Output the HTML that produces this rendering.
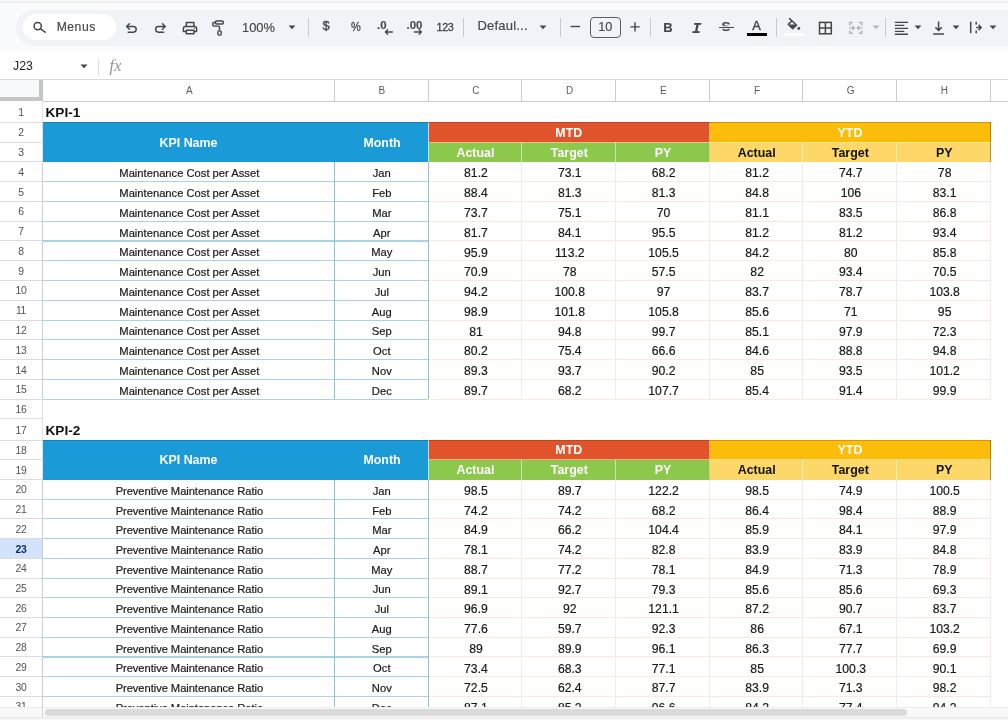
<!DOCTYPE html>
<html lang="en"><head><meta charset="utf-8"><title>KPI Sheet</title>
<style>
html,body{margin:0;padding:0;}
body{width:1008px;height:720px;overflow:hidden;background:#fff;position:relative;font-family:"Liberation Sans",sans-serif;color:#1f1f1f;}
div,svg,span{position:absolute;box-sizing:border-box;}
.t{white-space:nowrap;text-align:center;}
.cell{font-size:11.2px;color:#161616;-webkit-text-stroke:0.2px #222;white-space:nowrap;text-align:center;}
.num{font-size:12.2px;}
.rn{font-size:10.4px;letter-spacing:-0.35px;color:#4d5156;text-align:center;white-space:nowrap;}
.ch{font-size:10px;color:#585c61;text-align:center;white-space:nowrap;}
.hb{font-weight:bold;font-size:12.4px;text-align:center;white-space:nowrap;}
.tb{color:#444746;white-space:nowrap;-webkit-text-stroke:0.15px #444746;}
.sep{width:1px;background:#c7cace;top:18px;height:19px;}
</style></head><body><div id="w" style="left:0;top:0;width:1008px;height:720px;will-change:transform;">

<div style="left:0.00px;top:0.00px;width:1008.00px;height:3.00px;background:#f6f6f6;"></div>
<div style="left:0.00px;top:2.20px;width:1008.00px;height:1.00px;background:#ebebec;"></div>
<div style="left:0.00px;top:3.00px;width:1008.00px;height:50.00px;background:#f9fbfd;"></div>
<div style="left:16.00px;top:9.50px;width:1024.00px;height:36.00px;background:#f0f3f8;border-radius:18px;"></div>
<div style="left:23.00px;top:14.00px;width:93.00px;height:26.00px;background:#fff;border-radius:13px;"></div>
<div style="left:0.00px;top:53.00px;width:1008.00px;height:26.00px;background:#fff;"></div>
<div style="left:0.00px;top:78.60px;width:1008.00px;height:1.00px;background:#d9d9d9;"></div>
<!-- search -->
<svg style="left:30px;top:18px" width="20" height="20" viewBox="0 0 20 20" fill="none" stroke="#444746" stroke-width="1.5" stroke-linecap="round"><circle cx="7.7" cy="8.1" r="3.65"/><path d="M10.4 10.8L15.2 14.2"/></svg>
<div class="tb" style="left:56.7px;top:19px;font-size:12.2px;line-height:16px;letter-spacing:0.5px;">Menus</div>
<!-- undo -->
<svg style="left:121px;top:18px" width="20" height="20" viewBox="0 0 20 20" fill="none" stroke="#444746" stroke-width="1.45" stroke-linecap="round" stroke-linejoin="round"><path d="M5.8 8.5H12.35a2.85 2.85 0 0 1 0 5.7H7.2"/><path d="M8.4 5.8L5.7 8.5L8.4 11.2"/></svg>
<!-- redo -->
<svg style="left:150px;top:18px" width="20" height="20" viewBox="0 0 20 20" fill="none" stroke="#444746" stroke-width="1.45" stroke-linecap="round" stroke-linejoin="round"><path d="M15.1 8.5H8.45a2.85 2.85 0 0 0 0 5.7H13.6"/><path d="M12.5 5.8L15.2 8.5L12.5 11.2"/></svg>
<!-- print -->
<svg style="left:179.5px;top:17.5px" width="20" height="20" viewBox="0 0 20 20" fill="none" stroke="#444746" stroke-width="1.45" stroke-linejoin="round"><path d="M6.3 8.4V4.4h7.6v4"/><path d="M6.3 13.5H3.4V10.2a1.8 1.8 0 0 1 1.8-1.8h9.6a1.8 1.8 0 0 1 1.8 1.8V13.5h-2.7"/><path d="M6.3 12.2h7.6v3.6H6.3z"/><circle cx="14.6" cy="10.4" r="0.55" fill="#444746" stroke="none"/></svg>
<!-- paint format -->
<svg style="left:208px;top:18px" width="20" height="20" viewBox="0 0 20 20" fill="none" stroke="#444746" stroke-width="1.4" stroke-linejoin="round"><rect x="7.5" y="3" width="7.8" height="3" rx="0.9"/><path d="M7.5 4.5H5.8a1 1 0 0 0-1 1V7.1a1 1 0 0 0 1 1H10.5a1 1 0 0 1 1 1V12.6"/><rect x="9.9" y="12.9" width="3.3" height="4.2" rx="1"/></svg>
<div class="tb" style="left:242px;top:19.5px;font-size:12.9px;line-height:16px;">100%</div>
<svg style="left:288px;top:25.3px" width="8" height="5" viewBox="0 0 8 5"><path d="M0.6 0.5h6.8L4 4.2z" fill="#444746"/></svg>
<div class="sep" style="left:308px;"></div>
<div class="tb" style="left:322.6px;top:18.3px;font-size:12.8px;line-height:16px;-webkit-text-stroke:0.35px #444746">$</div>
<div class="tb" style="left:350.9px;top:18.6px;font-size:13.4px;line-height:16px;color:#444746;-webkit-text-stroke:0.3px #444746;transform:scaleX(0.82);transform-origin:0 0;">%</div>
<div class="tb" style="left:377px;top:16.5px;font-size:11.4px;line-height:16px;font-weight:bold;color:#4a4d4c">.0</div>
<svg style="left:384px;top:28px" width="10" height="8" viewBox="0 0 10 8" fill="none" stroke="#444746" stroke-width="1.3" stroke-linecap="round" stroke-linejoin="round"><path d="M1.4 4H8.4M3.6 1.8L1.4 4L3.6 6.2"/></svg>
<div class="tb" style="left:406.5px;top:16.5px;font-size:11.4px;line-height:16px;font-weight:bold;color:#4a4d4c">.00</div>
<svg style="left:413px;top:28px" width="10" height="8" viewBox="0 0 10 8" fill="none" stroke="#444746" stroke-width="1.3" stroke-linecap="round" stroke-linejoin="round"><path d="M1.4 4H8.4M6.2 1.8L8.4 4L6.2 6.2"/></svg>
<div class="tb" style="left:436.6px;top:18.8px;font-size:10.8px;line-height:16px;letter-spacing:-0.45px;-webkit-text-stroke:0.3px #444746;">123</div>
<div class="sep" style="left:463px;"></div>
<div class="tb" style="left:477.5px;top:18px;font-size:13px;line-height:16px;letter-spacing:0.2px;">Defaul...</div>
<svg style="left:539px;top:25.3px" width="8" height="5" viewBox="0 0 8 5"><path d="M0.6 0.5h6.8L4 4.2z" fill="#444746"/></svg>
<div class="sep" style="left:560px;"></div>
<svg style="left:569px;top:21px" width="12" height="12" viewBox="0 0 12 12" fill="none" stroke="#444746" stroke-width="1.4"><path d="M1.6 5.5H11"/></svg>
<div style="left:590px;top:16.5px;width:30.6px;height:21.8px;border:1px solid #5b5e5d;border-radius:4px;"></div>
<div class="tb" style="left:590px;width:30.6px;top:19.2px;font-size:12.6px;line-height:16px;text-align:center;">10</div>
<svg style="left:629px;top:21px" width="12" height="12" viewBox="0 0 12 12" fill="none" stroke="#444746" stroke-width="1.4"><path d="M1.3 5.9H10.7M6 1.2V10.6"/></svg>
<div class="sep" style="left:650px;"></div>
<div class="tb" style="left:663.3px;top:19.6px;font-size:13px;line-height:16px;font-weight:bold;">B</div>
<div class="tb" style="left:692px;top:20.5px;font-family:'Liberation Mono',monospace;font-style:italic;font-weight:bold;font-size:15.5px;line-height:16px;">I</div>
<!-- strikethrough -->
<div class="tb" style="left:721.6px;top:19.4px;font-size:13.6px;line-height:16px;font-weight:bold;">S</div>
<div style="left:719px;top:26.6px;width:14.8px;height:1.5px;background:#444746;box-shadow:0 -1.2px 0 #f0f3f8,0 1.2px 0 #f0f3f8;"></div>
<!-- text color -->
<div class="tb" style="left:752.2px;top:17.6px;font-size:12.8px;line-height:16px;-webkit-text-stroke:0.4px #444746;">A</div>
<div style="left:746.6px;top:32.8px;width:20.4px;height:3.1px;background:#000;"></div>
<div class="sep" style="left:775.5px;"></div>
<!-- fill -->
<svg style="left:784px;top:16px" width="22" height="16" viewBox="0 0 22 16" fill="none" stroke="#444746" stroke-width="1.45" stroke-linejoin="round" stroke-linecap="round"><path d="M5.6 2.6L12.6 9.2L8.7 12.7L4.2 8.2L8.1 4.9"/><path d="M4.4 8.5h8L8.7 12.4z" fill="#444746" stroke="none"/><circle cx="14.8" cy="12.4" r="1.45" fill="#444746" stroke="none"/></svg>
<div style="left:783.8px;top:32.8px;width:21px;height:3.1px;background:#fff;"></div>
<!-- borders -->
<svg style="left:817px;top:20px" width="17" height="16" viewBox="0 0 17 16" fill="none" stroke="#444746" stroke-width="1.5"><rect x="2.5" y="2.4" width="11.8" height="11.4"/><path d="M8.4 2.4V13.8M2.5 8.1H14.3"/></svg>
<!-- merge (disabled) -->
<svg style="left:847px;top:20px" width="18" height="16" viewBox="0 0 18 16" fill="none" stroke="#b1b4b7" stroke-width="1.5"><path d="M2.8 5.2V2.6H5.8M11.8 2.6h3v2.6M14.8 10.6v2.6h-3M5.8 13.2H2.8V10.6"/><path d="M2.2 7.9H7.4M5.4 5.9L7.4 7.9L5.4 9.9M15.4 7.9H10.2M12.2 5.9L10.2 7.9L12.2 9.9" stroke-width="1.35"/></svg>
<svg style="left:871.5px;top:25.3px" width="8" height="5" viewBox="0 0 8 5"><path d="M0.6 0.5h6.8L4 4.2z" fill="#b4b7b9"/></svg>
<div class="sep" style="left:885px;"></div>
<!-- align -->
<svg style="left:893px;top:20px" width="17" height="17" viewBox="0 0 17 17" fill="none" stroke="#444746" stroke-width="1.4"><path d="M1.9 2.4H15M1.9 5.4H11.3M1.9 8.4H15M1.9 11.4H11.3M1.9 14.3H15"/></svg>
<svg style="left:913.5px;top:25.3px" width="8" height="5" viewBox="0 0 8 5"><path d="M0.6 0.5h6.8L4 4.2z" fill="#444746"/></svg>
<!-- valign -->
<svg style="left:931px;top:20px" width="16" height="17" viewBox="0 0 16 17" fill="none" stroke="#444746" stroke-width="1.5" stroke-linejoin="round"><path d="M7.6 1.4V10.2M4.4 7.2L7.6 10.4L10.8 7.2M2.2 14H13"/></svg>
<svg style="left:951.5px;top:25.3px" width="8" height="5" viewBox="0 0 8 5"><path d="M0.6 0.5h6.8L4 4.2z" fill="#444746"/></svg>
<!-- overflow -->
<svg style="left:968px;top:20px" width="16" height="17" viewBox="0 0 16 17" fill="none" stroke="#444746" stroke-width="1.5" stroke-linejoin="round"><path d="M2.7 1.8V13.2M8.2 7.5H13.2M10.6 4.9L13.2 7.5L10.6 10.1M8.2 1.8V4.5M8.2 10.5V13.2"/></svg>
<svg style="left:989px;top:25.3px" width="8" height="5" viewBox="0 0 8 5"><path d="M0.6 0.5h6.8L4 4.2z" fill="#444746"/></svg>

<div class="t" style="left:13px;top:58.5px;font-size:12.3px;color:#1f1f1f;text-align:left;line-height:15px;">J23</div>
<svg style="left:79.5px;top:63.5px" width="8" height="5" viewBox="0 0 8 5"><path d="M0.5 0.5h7L4 4.3z" fill="#444746"/></svg>
<div style="left:98.00px;top:59.00px;width:1.00px;height:15.50px;background:#dadce0;"></div>
<div class="t" style="left:109.5px;top:57px;font-family:'Liberation Serif',serif;font-style:italic;font-size:16px;color:#8f9398;line-height:18px;letter-spacing:0.4px;">fx</div>
<div style="left:0.00px;top:79.60px;width:1008.00px;height:21.90px;background:#fff;"></div>
<div style="left:0.00px;top:79.60px;width:39.00px;height:17.90px;background:#f8f9fa;"></div>
<div style="left:39.00px;top:79.60px;width:3.60px;height:21.80px;background:#c4c7c5;"></div>
<div style="left:0.00px;top:97.40px;width:42.60px;height:4.00px;background:#c4c7c5;"></div>
<div style="left:42.60px;top:100.70px;width:965.40px;height:1.00px;background:#cbcbcb;"></div>
<div style="left:333.50px;top:79.60px;width:1.00px;height:21.80px;background:#cbcbcb;"></div>
<div style="left:427.50px;top:79.60px;width:1.00px;height:21.80px;background:#cbcbcb;"></div>
<div style="left:521.40px;top:79.60px;width:1.00px;height:21.80px;background:#cbcbcb;"></div>
<div style="left:615.20px;top:79.60px;width:1.00px;height:21.80px;background:#cbcbcb;"></div>
<div style="left:709.00px;top:79.60px;width:1.00px;height:21.80px;background:#cbcbcb;"></div>
<div style="left:802.30px;top:79.60px;width:1.00px;height:21.80px;background:#cbcbcb;"></div>
<div style="left:896.30px;top:79.60px;width:1.00px;height:21.80px;background:#cbcbcb;"></div>
<div style="left:990.00px;top:79.60px;width:1.00px;height:21.80px;background:#cbcbcb;"></div>
<div class="ch" style="left:43.8px;width:291px;top:84px;line-height:13px;">A</div>
<div class="ch" style="left:334.8px;width:94px;top:84px;line-height:13px;">B</div>
<div class="ch" style="left:428.8px;width:93.89999999999998px;top:84px;line-height:13px;">C</div>
<div class="ch" style="left:522.6999999999999px;width:93.80000000000007px;top:84px;line-height:13px;">D</div>
<div class="ch" style="left:616.5px;width:93.79999999999995px;top:84px;line-height:13px;">E</div>
<div class="ch" style="left:710.3px;width:93.29999999999995px;top:84px;line-height:13px;">F</div>
<div class="ch" style="left:803.5999999999999px;width:94.0px;top:84px;line-height:13px;">G</div>
<div class="ch" style="left:897.5999999999999px;width:93.70000000000005px;top:84px;line-height:13px;">H</div>
<div style="left:42.20px;top:101.70px;width:1.00px;height:618.30px;background:#dde1e6;"></div>
<div class="rn" style="left:0;width:42px;top:105.75px;line-height:13px;">1</div>
<div style="left:0.00px;top:121.70px;width:42.50px;height:1.00px;background:#dcdcdc;"></div>
<div class="rn" style="left:0;width:42px;top:126.30px;line-height:13px;">2</div>
<div style="left:0.00px;top:141.80px;width:42.50px;height:1.00px;background:#dcdcdc;"></div>
<div class="rn" style="left:0;width:42px;top:146.15px;line-height:13px;">3</div>
<div style="left:0.00px;top:161.40px;width:42.50px;height:1.00px;background:#dcdcdc;"></div>
<div class="rn" style="left:0;width:42px;top:165.84px;line-height:13px;">4</div>
<div style="left:0.00px;top:181.17px;width:42.50px;height:1.00px;background:#dcdcdc;"></div>
<div class="rn" style="left:0;width:42px;top:185.61px;line-height:13px;">5</div>
<div style="left:0.00px;top:200.94px;width:42.50px;height:1.00px;background:#dcdcdc;"></div>
<div class="rn" style="left:0;width:42px;top:205.38px;line-height:13px;">6</div>
<div style="left:0.00px;top:220.71px;width:42.50px;height:1.00px;background:#dcdcdc;"></div>
<div class="rn" style="left:0;width:42px;top:225.15px;line-height:13px;">7</div>
<div style="left:0.00px;top:240.48px;width:42.50px;height:1.00px;background:#dcdcdc;"></div>
<div class="rn" style="left:0;width:42px;top:244.92px;line-height:13px;">8</div>
<div style="left:0.00px;top:260.25px;width:42.50px;height:1.00px;background:#dcdcdc;"></div>
<div class="rn" style="left:0;width:42px;top:264.69px;line-height:13px;">9</div>
<div style="left:0.00px;top:280.02px;width:42.50px;height:1.00px;background:#dcdcdc;"></div>
<div class="rn" style="left:0;width:42px;top:284.45px;line-height:13px;">10</div>
<div style="left:0.00px;top:299.79px;width:42.50px;height:1.00px;background:#dcdcdc;"></div>
<div class="rn" style="left:0;width:42px;top:304.23px;line-height:13px;">11</div>
<div style="left:0.00px;top:319.56px;width:42.50px;height:1.00px;background:#dcdcdc;"></div>
<div class="rn" style="left:0;width:42px;top:324.00px;line-height:13px;">12</div>
<div style="left:0.00px;top:339.33px;width:42.50px;height:1.00px;background:#dcdcdc;"></div>
<div class="rn" style="left:0;width:42px;top:343.76px;line-height:13px;">13</div>
<div style="left:0.00px;top:359.10px;width:42.50px;height:1.00px;background:#dcdcdc;"></div>
<div class="rn" style="left:0;width:42px;top:363.54px;line-height:13px;">14</div>
<div style="left:0.00px;top:378.87px;width:42.50px;height:1.00px;background:#dcdcdc;"></div>
<div class="rn" style="left:0;width:42px;top:383.31px;line-height:13px;">15</div>
<div style="left:0.00px;top:398.64px;width:42.50px;height:1.00px;background:#dcdcdc;"></div>
<div class="rn" style="left:0;width:42px;top:403.07px;line-height:13px;">16</div>
<div style="left:0.00px;top:418.41px;width:42.50px;height:1.00px;background:#dcdcdc;"></div>
<div class="rn" style="left:0;width:42px;top:423.51px;line-height:13px;">17</div>
<div style="left:0.00px;top:439.51px;width:42.50px;height:1.00px;background:#dcdcdc;"></div>
<div class="rn" style="left:0;width:42px;top:443.94px;line-height:13px;">18</div>
<div style="left:0.00px;top:459.26px;width:42.50px;height:1.00px;background:#dcdcdc;"></div>
<div class="rn" style="left:0;width:42px;top:463.69px;line-height:13px;">19</div>
<div style="left:0.00px;top:479.01px;width:42.50px;height:1.00px;background:#dcdcdc;"></div>
<div class="rn" style="left:0;width:42px;top:483.42px;line-height:13px;">20</div>
<div style="left:0.00px;top:498.73px;width:42.50px;height:1.00px;background:#dcdcdc;"></div>
<div class="rn" style="left:0;width:42px;top:503.14px;line-height:13px;">21</div>
<div style="left:0.00px;top:518.45px;width:42.50px;height:1.00px;background:#dcdcdc;"></div>
<div class="rn" style="left:0;width:42px;top:522.86px;line-height:13px;">22</div>
<div style="left:0.00px;top:538.17px;width:42.50px;height:1.00px;background:#dcdcdc;"></div>
<div style="left:0.00px;top:539.17px;width:42.50px;height:19.72px;background:#d3e3fd;"></div>
<div class="rn" style="left:0;width:42px;top:542.58px;line-height:13px;color:#0c2d60;font-weight:bold;">23</div>
<div style="left:0.00px;top:557.89px;width:42.50px;height:1.00px;background:#dcdcdc;"></div>
<div class="rn" style="left:0;width:42px;top:562.30px;line-height:13px;">24</div>
<div style="left:0.00px;top:577.61px;width:42.50px;height:1.00px;background:#dcdcdc;"></div>
<div class="rn" style="left:0;width:42px;top:582.02px;line-height:13px;">25</div>
<div style="left:0.00px;top:597.33px;width:42.50px;height:1.00px;background:#dcdcdc;"></div>
<div class="rn" style="left:0;width:42px;top:601.74px;line-height:13px;">26</div>
<div style="left:0.00px;top:617.05px;width:42.50px;height:1.00px;background:#dcdcdc;"></div>
<div class="rn" style="left:0;width:42px;top:621.46px;line-height:13px;">27</div>
<div style="left:0.00px;top:636.77px;width:42.50px;height:1.00px;background:#dcdcdc;"></div>
<div class="rn" style="left:0;width:42px;top:641.18px;line-height:13px;">28</div>
<div style="left:0.00px;top:656.49px;width:42.50px;height:1.00px;background:#dcdcdc;"></div>
<div class="rn" style="left:0;width:42px;top:660.90px;line-height:13px;">29</div>
<div style="left:0.00px;top:676.21px;width:42.50px;height:1.00px;background:#dcdcdc;"></div>
<div class="rn" style="left:0;width:42px;top:680.62px;line-height:13px;">30</div>
<div style="left:0.00px;top:695.93px;width:42.50px;height:1.00px;background:#dcdcdc;"></div>
<div class="rn" style="left:0;width:42px;top:700.34px;line-height:13px;">31</div>
<div style="left:0.00px;top:715.65px;width:42.50px;height:1.00px;background:#dcdcdc;"></div>
<div class="t" style="left:45.5px;top:105.00px;font-weight:bold;font-size:13.6px;color:#111;line-height:16px;text-align:left;">KPI-1</div>
<div style="left:43.00px;top:122.20px;width:385.00px;height:40.00px;background:#1a9ad7;"></div>
<div class="hb" style="left:43px;width:291px;top:136.05px;line-height:15px;color:#fff;">KPI Name</div>
<div class="hb" style="left:335.0px;width:94px;top:136.05px;line-height:15px;color:#fff;">Month</div>
<div style="left:428.00px;top:122.20px;width:281.50px;height:20.10px;background:#e0532b;"></div>
<div class="hb" style="left:428px;width:281.5px;top:126.35px;line-height:15px;color:#fff;">MTD</div>
<div style="left:709.50px;top:122.20px;width:281.00px;height:20.10px;background:#fbbd0a;"></div>
<div class="hb" style="left:709.5px;width:281.0px;top:126.35px;line-height:15px;color:#fff;">YTD</div>
<div style="left:428.00px;top:142.30px;width:281.50px;height:19.90px;background:#8bc84c;"></div>
<div style="left:709.50px;top:142.30px;width:281.00px;height:19.90px;background:#fdd768;"></div>
<div class="hb" style="left:428.50px;width:93.90px;top:146.30px;line-height:15px;color:#fff;">Actual</div>
<div class="hb" style="left:522.40px;width:93.80px;top:146.30px;line-height:15px;color:#fff;">Target</div>
<div class="hb" style="left:616.20px;width:93.80px;top:146.30px;line-height:15px;color:#fff;">PY</div>
<div class="hb" style="left:710.00px;width:93.30px;top:146.30px;line-height:15px;color:#111;">Actual</div>
<div class="hb" style="left:803.30px;width:94.00px;top:146.30px;line-height:15px;color:#111;">Target</div>
<div class="hb" style="left:897.30px;width:93.70px;top:146.30px;line-height:15px;color:#111;">PY</div>
<div style="left:428.00px;top:141.80px;width:281.50px;height:1.00px;background:#f3c9a4;opacity:.75;"></div>
<div style="left:709.50px;top:141.80px;width:281.00px;height:1.00px;background:#fde9a8;opacity:.8;"></div>
<div style="left:427.50px;top:122.20px;width:1.00px;height:20.10px;background:#e9dcd8;opacity:.9;"></div>
<div style="left:427.50px;top:142.30px;width:1.00px;height:19.60px;background:#bdeed8;opacity:.9;"></div>
<div style="left:521.40px;top:142.30px;width:1.00px;height:19.60px;background:#d9efc0;opacity:.8;"></div>
<div style="left:615.20px;top:142.30px;width:1.00px;height:19.60px;background:#d9efc0;opacity:.8;"></div>
<div style="left:709.00px;top:122.50px;width:1.00px;height:39.40px;background:#f7d58c;opacity:.7;"></div>
<div style="left:802.30px;top:142.30px;width:1.00px;height:19.60px;background:#fff0c4;opacity:.85;"></div>
<div style="left:896.30px;top:142.30px;width:1.00px;height:19.60px;background:#fff0c4;opacity:.85;"></div>
<div style="left:43.00px;top:122.20px;width:947.50px;height:1.00px;background:rgba(40,30,0,0.22);"></div>
<div style="left:989.50px;top:122.20px;width:1.00px;height:39.70px;background:rgba(40,30,0,0.38);"></div>
<div class="cell" style="left:43.8px;width:291px;top:166.29px;line-height:15px;">Maintenance Cost per Asset</div>
<div class="cell" style="left:334.8px;width:94px;top:166.29px;line-height:15px;">Jan</div>
<div class="cell num" style="left:429.00px;width:93.90px;top:166.44px;line-height:15px;">81.2</div>
<div class="cell num" style="left:522.90px;width:93.80px;top:166.44px;line-height:15px;">73.1</div>
<div class="cell num" style="left:616.70px;width:93.80px;top:166.44px;line-height:15px;">68.2</div>
<div class="cell num" style="left:710.50px;width:93.30px;top:166.44px;line-height:15px;">81.2</div>
<div class="cell num" style="left:803.80px;width:94.00px;top:166.44px;line-height:15px;">74.7</div>
<div class="cell num" style="left:897.80px;width:93.70px;top:166.44px;line-height:15px;">78</div>
<div style="left:43.00px;top:181.12px;width:385.00px;height:1.10px;background:#aad3e2;"></div>
<div style="left:428.00px;top:181.17px;width:562.50px;height:1.00px;background:#f8e9e1;"></div>
<div class="cell" style="left:43.8px;width:291px;top:186.06px;line-height:15px;">Maintenance Cost per Asset</div>
<div class="cell" style="left:334.8px;width:94px;top:186.06px;line-height:15px;">Feb</div>
<div class="cell num" style="left:429.00px;width:93.90px;top:186.21px;line-height:15px;">88.4</div>
<div class="cell num" style="left:522.90px;width:93.80px;top:186.21px;line-height:15px;">81.3</div>
<div class="cell num" style="left:616.70px;width:93.80px;top:186.21px;line-height:15px;">81.3</div>
<div class="cell num" style="left:710.50px;width:93.30px;top:186.21px;line-height:15px;">84.8</div>
<div class="cell num" style="left:803.80px;width:94.00px;top:186.21px;line-height:15px;">106</div>
<div class="cell num" style="left:897.80px;width:93.70px;top:186.21px;line-height:15px;">83.1</div>
<div style="left:43.00px;top:200.89px;width:385.00px;height:1.10px;background:#aad3e2;"></div>
<div style="left:428.00px;top:200.94px;width:562.50px;height:1.00px;background:#f8e9e1;"></div>
<div class="cell" style="left:43.8px;width:291px;top:205.82px;line-height:15px;">Maintenance Cost per Asset</div>
<div class="cell" style="left:334.8px;width:94px;top:205.82px;line-height:15px;">Mar</div>
<div class="cell num" style="left:429.00px;width:93.90px;top:205.97px;line-height:15px;">73.7</div>
<div class="cell num" style="left:522.90px;width:93.80px;top:205.97px;line-height:15px;">75.1</div>
<div class="cell num" style="left:616.70px;width:93.80px;top:205.97px;line-height:15px;">70</div>
<div class="cell num" style="left:710.50px;width:93.30px;top:205.97px;line-height:15px;">81.1</div>
<div class="cell num" style="left:803.80px;width:94.00px;top:205.97px;line-height:15px;">83.5</div>
<div class="cell num" style="left:897.80px;width:93.70px;top:205.97px;line-height:15px;">86.8</div>
<div style="left:43.00px;top:220.66px;width:385.00px;height:1.10px;background:#aad3e2;"></div>
<div style="left:428.00px;top:220.71px;width:562.50px;height:1.00px;background:#f8e9e1;"></div>
<div class="cell" style="left:43.8px;width:291px;top:225.60px;line-height:15px;">Maintenance Cost per Asset</div>
<div class="cell" style="left:334.8px;width:94px;top:225.60px;line-height:15px;">Apr</div>
<div class="cell num" style="left:429.00px;width:93.90px;top:225.75px;line-height:15px;">81.7</div>
<div class="cell num" style="left:522.90px;width:93.80px;top:225.75px;line-height:15px;">84.1</div>
<div class="cell num" style="left:616.70px;width:93.80px;top:225.75px;line-height:15px;">95.5</div>
<div class="cell num" style="left:710.50px;width:93.30px;top:225.75px;line-height:15px;">81.2</div>
<div class="cell num" style="left:803.80px;width:94.00px;top:225.75px;line-height:15px;">81.2</div>
<div class="cell num" style="left:897.80px;width:93.70px;top:225.75px;line-height:15px;">93.4</div>
<div style="left:43.00px;top:240.43px;width:385.00px;height:1.10px;background:#aad3e2;"></div>
<div style="left:428.00px;top:240.48px;width:562.50px;height:1.00px;background:#f8e9e1;"></div>
<div class="cell" style="left:43.8px;width:291px;top:245.37px;line-height:15px;">Maintenance Cost per Asset</div>
<div class="cell" style="left:334.8px;width:94px;top:245.37px;line-height:15px;">May</div>
<div class="cell num" style="left:429.00px;width:93.90px;top:245.52px;line-height:15px;">95.9</div>
<div class="cell num" style="left:522.90px;width:93.80px;top:245.52px;line-height:15px;">113.2</div>
<div class="cell num" style="left:616.70px;width:93.80px;top:245.52px;line-height:15px;">105.5</div>
<div class="cell num" style="left:710.50px;width:93.30px;top:245.52px;line-height:15px;">84.2</div>
<div class="cell num" style="left:803.80px;width:94.00px;top:245.52px;line-height:15px;">80</div>
<div class="cell num" style="left:897.80px;width:93.70px;top:245.52px;line-height:15px;">85.8</div>
<div style="left:43.00px;top:260.20px;width:385.00px;height:1.10px;background:#aad3e2;"></div>
<div style="left:428.00px;top:260.25px;width:562.50px;height:1.00px;background:#f8e9e1;"></div>
<div class="cell" style="left:43.8px;width:291px;top:265.13px;line-height:15px;">Maintenance Cost per Asset</div>
<div class="cell" style="left:334.8px;width:94px;top:265.13px;line-height:15px;">Jun</div>
<div class="cell num" style="left:429.00px;width:93.90px;top:265.28px;line-height:15px;">70.9</div>
<div class="cell num" style="left:522.90px;width:93.80px;top:265.28px;line-height:15px;">78</div>
<div class="cell num" style="left:616.70px;width:93.80px;top:265.28px;line-height:15px;">57.5</div>
<div class="cell num" style="left:710.50px;width:93.30px;top:265.28px;line-height:15px;">82</div>
<div class="cell num" style="left:803.80px;width:94.00px;top:265.28px;line-height:15px;">93.4</div>
<div class="cell num" style="left:897.80px;width:93.70px;top:265.28px;line-height:15px;">70.5</div>
<div style="left:43.00px;top:279.97px;width:385.00px;height:1.10px;background:#aad3e2;"></div>
<div style="left:428.00px;top:280.02px;width:562.50px;height:1.00px;background:#f8e9e1;"></div>
<div class="cell" style="left:43.8px;width:291px;top:284.90px;line-height:15px;">Maintenance Cost per Asset</div>
<div class="cell" style="left:334.8px;width:94px;top:284.90px;line-height:15px;">Jul</div>
<div class="cell num" style="left:429.00px;width:93.90px;top:285.05px;line-height:15px;">94.2</div>
<div class="cell num" style="left:522.90px;width:93.80px;top:285.05px;line-height:15px;">100.8</div>
<div class="cell num" style="left:616.70px;width:93.80px;top:285.05px;line-height:15px;">97</div>
<div class="cell num" style="left:710.50px;width:93.30px;top:285.05px;line-height:15px;">83.7</div>
<div class="cell num" style="left:803.80px;width:94.00px;top:285.05px;line-height:15px;">78.7</div>
<div class="cell num" style="left:897.80px;width:93.70px;top:285.05px;line-height:15px;">103.8</div>
<div style="left:43.00px;top:299.74px;width:385.00px;height:1.10px;background:#aad3e2;"></div>
<div style="left:428.00px;top:299.79px;width:562.50px;height:1.00px;background:#f8e9e1;"></div>
<div class="cell" style="left:43.8px;width:291px;top:304.68px;line-height:15px;">Maintenance Cost per Asset</div>
<div class="cell" style="left:334.8px;width:94px;top:304.68px;line-height:15px;">Aug</div>
<div class="cell num" style="left:429.00px;width:93.90px;top:304.82px;line-height:15px;">98.9</div>
<div class="cell num" style="left:522.90px;width:93.80px;top:304.82px;line-height:15px;">101.8</div>
<div class="cell num" style="left:616.70px;width:93.80px;top:304.82px;line-height:15px;">105.8</div>
<div class="cell num" style="left:710.50px;width:93.30px;top:304.82px;line-height:15px;">85.6</div>
<div class="cell num" style="left:803.80px;width:94.00px;top:304.82px;line-height:15px;">71</div>
<div class="cell num" style="left:897.80px;width:93.70px;top:304.82px;line-height:15px;">95</div>
<div style="left:43.00px;top:319.51px;width:385.00px;height:1.10px;background:#aad3e2;"></div>
<div style="left:428.00px;top:319.56px;width:562.50px;height:1.00px;background:#f8e9e1;"></div>
<div class="cell" style="left:43.8px;width:291px;top:324.44px;line-height:15px;">Maintenance Cost per Asset</div>
<div class="cell" style="left:334.8px;width:94px;top:324.44px;line-height:15px;">Sep</div>
<div class="cell num" style="left:429.00px;width:93.90px;top:324.59px;line-height:15px;">81</div>
<div class="cell num" style="left:522.90px;width:93.80px;top:324.59px;line-height:15px;">94.8</div>
<div class="cell num" style="left:616.70px;width:93.80px;top:324.59px;line-height:15px;">99.7</div>
<div class="cell num" style="left:710.50px;width:93.30px;top:324.59px;line-height:15px;">85.1</div>
<div class="cell num" style="left:803.80px;width:94.00px;top:324.59px;line-height:15px;">97.9</div>
<div class="cell num" style="left:897.80px;width:93.70px;top:324.59px;line-height:15px;">72.3</div>
<div style="left:43.00px;top:339.28px;width:385.00px;height:1.10px;background:#aad3e2;"></div>
<div style="left:428.00px;top:339.33px;width:562.50px;height:1.00px;background:#f8e9e1;"></div>
<div class="cell" style="left:43.8px;width:291px;top:344.21px;line-height:15px;">Maintenance Cost per Asset</div>
<div class="cell" style="left:334.8px;width:94px;top:344.21px;line-height:15px;">Oct</div>
<div class="cell num" style="left:429.00px;width:93.90px;top:344.36px;line-height:15px;">80.2</div>
<div class="cell num" style="left:522.90px;width:93.80px;top:344.36px;line-height:15px;">75.4</div>
<div class="cell num" style="left:616.70px;width:93.80px;top:344.36px;line-height:15px;">66.6</div>
<div class="cell num" style="left:710.50px;width:93.30px;top:344.36px;line-height:15px;">84.6</div>
<div class="cell num" style="left:803.80px;width:94.00px;top:344.36px;line-height:15px;">88.8</div>
<div class="cell num" style="left:897.80px;width:93.70px;top:344.36px;line-height:15px;">94.8</div>
<div style="left:43.00px;top:359.05px;width:385.00px;height:1.10px;background:#aad3e2;"></div>
<div style="left:428.00px;top:359.10px;width:562.50px;height:1.00px;background:#f8e9e1;"></div>
<div class="cell" style="left:43.8px;width:291px;top:363.99px;line-height:15px;">Maintenance Cost per Asset</div>
<div class="cell" style="left:334.8px;width:94px;top:363.99px;line-height:15px;">Nov</div>
<div class="cell num" style="left:429.00px;width:93.90px;top:364.13px;line-height:15px;">89.3</div>
<div class="cell num" style="left:522.90px;width:93.80px;top:364.13px;line-height:15px;">93.7</div>
<div class="cell num" style="left:616.70px;width:93.80px;top:364.13px;line-height:15px;">90.2</div>
<div class="cell num" style="left:710.50px;width:93.30px;top:364.13px;line-height:15px;">85</div>
<div class="cell num" style="left:803.80px;width:94.00px;top:364.13px;line-height:15px;">93.5</div>
<div class="cell num" style="left:897.80px;width:93.70px;top:364.13px;line-height:15px;">101.2</div>
<div style="left:43.00px;top:378.82px;width:385.00px;height:1.10px;background:#aad3e2;"></div>
<div style="left:428.00px;top:378.87px;width:562.50px;height:1.00px;background:#f8e9e1;"></div>
<div class="cell" style="left:43.8px;width:291px;top:383.75px;line-height:15px;">Maintenance Cost per Asset</div>
<div class="cell" style="left:334.8px;width:94px;top:383.75px;line-height:15px;">Dec</div>
<div class="cell num" style="left:429.00px;width:93.90px;top:383.90px;line-height:15px;">89.7</div>
<div class="cell num" style="left:522.90px;width:93.80px;top:383.90px;line-height:15px;">68.2</div>
<div class="cell num" style="left:616.70px;width:93.80px;top:383.90px;line-height:15px;">107.7</div>
<div class="cell num" style="left:710.50px;width:93.30px;top:383.90px;line-height:15px;">85.4</div>
<div class="cell num" style="left:803.80px;width:94.00px;top:383.90px;line-height:15px;">91.4</div>
<div class="cell num" style="left:897.80px;width:93.70px;top:383.90px;line-height:15px;">99.9</div>
<div style="left:43.00px;top:398.59px;width:385.00px;height:1.10px;background:#aad3e2;"></div>
<div style="left:428.00px;top:398.64px;width:562.50px;height:1.00px;background:#f8e9e1;"></div>
<div style="left:333.50px;top:161.90px;width:1.00px;height:237.24px;background:#8dc0da;"></div>
<div style="left:427.50px;top:161.90px;width:1.00px;height:237.24px;background:#8dc0da;"></div>
<div style="left:42.20px;top:161.90px;width:1.00px;height:237.24px;background:#c3d0da;"></div>
<div style="left:521.40px;top:161.90px;width:1.00px;height:237.24px;background:#f8e9e1;"></div>
<div style="left:615.20px;top:161.90px;width:1.00px;height:237.24px;background:#f8e9e1;"></div>
<div style="left:709.00px;top:161.90px;width:1.00px;height:237.24px;background:#f8e9e1;"></div>
<div style="left:802.30px;top:161.90px;width:1.00px;height:237.24px;background:#f8e9e1;"></div>
<div style="left:896.30px;top:161.90px;width:1.00px;height:237.24px;background:#f8e9e1;"></div>
<div style="left:990.00px;top:161.90px;width:1.00px;height:237.24px;background:#f8e9e1;"></div>
<div class="t" style="left:45.5px;top:422.76px;font-weight:bold;font-size:13.6px;color:#111;line-height:16px;text-align:left;">KPI-2</div>
<div style="left:43.00px;top:440.01px;width:385.00px;height:39.80px;background:#1a9ad7;"></div>
<div class="hb" style="left:43px;width:291px;top:453.16px;line-height:15px;color:#fff;">KPI Name</div>
<div class="hb" style="left:335.0px;width:94px;top:453.16px;line-height:15px;color:#fff;">Month</div>
<div style="left:428.00px;top:440.01px;width:281.50px;height:19.75px;background:#e0532b;"></div>
<div class="hb" style="left:428px;width:281.5px;top:443.38px;line-height:15px;color:#fff;">MTD</div>
<div style="left:709.50px;top:440.01px;width:281.00px;height:19.75px;background:#fbbd0a;"></div>
<div class="hb" style="left:709.5px;width:281.0px;top:443.38px;line-height:15px;color:#fff;">YTD</div>
<div style="left:428.00px;top:459.76px;width:281.50px;height:20.05px;background:#8bc84c;"></div>
<div style="left:709.50px;top:459.76px;width:281.00px;height:20.05px;background:#fdd768;"></div>
<div class="hb" style="left:428.50px;width:93.90px;top:463.23px;line-height:15px;color:#fff;">Actual</div>
<div class="hb" style="left:522.40px;width:93.80px;top:463.23px;line-height:15px;color:#fff;">Target</div>
<div class="hb" style="left:616.20px;width:93.80px;top:463.23px;line-height:15px;color:#fff;">PY</div>
<div class="hb" style="left:710.00px;width:93.30px;top:463.23px;line-height:15px;color:#111;">Actual</div>
<div class="hb" style="left:803.30px;width:94.00px;top:463.23px;line-height:15px;color:#111;">Target</div>
<div class="hb" style="left:897.30px;width:93.70px;top:463.23px;line-height:15px;color:#111;">PY</div>
<div style="left:428.00px;top:459.26px;width:281.50px;height:1.00px;background:#f3c9a4;opacity:.75;"></div>
<div style="left:709.50px;top:459.26px;width:281.00px;height:1.00px;background:#fde9a8;opacity:.8;"></div>
<div style="left:427.50px;top:440.01px;width:1.00px;height:19.75px;background:#e9dcd8;opacity:.9;"></div>
<div style="left:427.50px;top:459.76px;width:1.00px;height:19.75px;background:#bdeed8;opacity:.9;"></div>
<div style="left:521.40px;top:459.76px;width:1.00px;height:19.75px;background:#d9efc0;opacity:.8;"></div>
<div style="left:615.20px;top:459.76px;width:1.00px;height:19.75px;background:#d9efc0;opacity:.8;"></div>
<div style="left:709.00px;top:440.31px;width:1.00px;height:39.20px;background:#f7d58c;opacity:.7;"></div>
<div style="left:802.30px;top:459.76px;width:1.00px;height:19.75px;background:#fff0c4;opacity:.85;"></div>
<div style="left:896.30px;top:459.76px;width:1.00px;height:19.75px;background:#fff0c4;opacity:.85;"></div>
<div style="left:43.00px;top:440.01px;width:947.50px;height:1.00px;background:rgba(40,30,0,0.22);"></div>
<div style="left:989.50px;top:440.01px;width:1.00px;height:39.50px;background:rgba(40,30,0,0.38);"></div>
<div class="cell" style="left:43.85px;width:291px;top:483.87px;line-height:15px;letter-spacing:-0.065px;">Preventive Maintenance Ratio</div>
<div class="cell" style="left:334.8px;width:94px;top:483.87px;line-height:15px;">Jan</div>
<div class="cell num" style="left:429.00px;width:93.90px;top:484.02px;line-height:15px;">98.5</div>
<div class="cell num" style="left:522.90px;width:93.80px;top:484.02px;line-height:15px;">89.7</div>
<div class="cell num" style="left:616.70px;width:93.80px;top:484.02px;line-height:15px;">122.2</div>
<div class="cell num" style="left:710.50px;width:93.30px;top:484.02px;line-height:15px;">98.5</div>
<div class="cell num" style="left:803.80px;width:94.00px;top:484.02px;line-height:15px;">74.9</div>
<div class="cell num" style="left:897.80px;width:93.70px;top:484.02px;line-height:15px;">100.5</div>
<div style="left:43.00px;top:498.68px;width:385.00px;height:1.10px;background:#aad3e2;"></div>
<div style="left:428.00px;top:498.73px;width:562.50px;height:1.00px;background:#f8e9e1;"></div>
<div class="cell" style="left:43.85px;width:291px;top:503.59px;line-height:15px;letter-spacing:-0.065px;">Preventive Maintenance Ratio</div>
<div class="cell" style="left:334.8px;width:94px;top:503.59px;line-height:15px;">Feb</div>
<div class="cell num" style="left:429.00px;width:93.90px;top:503.74px;line-height:15px;">74.2</div>
<div class="cell num" style="left:522.90px;width:93.80px;top:503.74px;line-height:15px;">74.2</div>
<div class="cell num" style="left:616.70px;width:93.80px;top:503.74px;line-height:15px;">68.2</div>
<div class="cell num" style="left:710.50px;width:93.30px;top:503.74px;line-height:15px;">86.4</div>
<div class="cell num" style="left:803.80px;width:94.00px;top:503.74px;line-height:15px;">98.4</div>
<div class="cell num" style="left:897.80px;width:93.70px;top:503.74px;line-height:15px;">88.9</div>
<div style="left:43.00px;top:518.40px;width:385.00px;height:1.10px;background:#aad3e2;"></div>
<div style="left:428.00px;top:518.45px;width:562.50px;height:1.00px;background:#f8e9e1;"></div>
<div class="cell" style="left:43.85px;width:291px;top:523.31px;line-height:15px;letter-spacing:-0.065px;">Preventive Maintenance Ratio</div>
<div class="cell" style="left:334.8px;width:94px;top:523.31px;line-height:15px;">Mar</div>
<div class="cell num" style="left:429.00px;width:93.90px;top:523.46px;line-height:15px;">84.9</div>
<div class="cell num" style="left:522.90px;width:93.80px;top:523.46px;line-height:15px;">66.2</div>
<div class="cell num" style="left:616.70px;width:93.80px;top:523.46px;line-height:15px;">104.4</div>
<div class="cell num" style="left:710.50px;width:93.30px;top:523.46px;line-height:15px;">85.9</div>
<div class="cell num" style="left:803.80px;width:94.00px;top:523.46px;line-height:15px;">84.1</div>
<div class="cell num" style="left:897.80px;width:93.70px;top:523.46px;line-height:15px;">97.9</div>
<div style="left:43.00px;top:538.12px;width:385.00px;height:1.10px;background:#aad3e2;"></div>
<div style="left:428.00px;top:538.17px;width:562.50px;height:1.00px;background:#f8e9e1;"></div>
<div class="cell" style="left:43.85px;width:291px;top:543.03px;line-height:15px;letter-spacing:-0.065px;">Preventive Maintenance Ratio</div>
<div class="cell" style="left:334.8px;width:94px;top:543.03px;line-height:15px;">Apr</div>
<div class="cell num" style="left:429.00px;width:93.90px;top:543.18px;line-height:15px;">78.1</div>
<div class="cell num" style="left:522.90px;width:93.80px;top:543.18px;line-height:15px;">74.2</div>
<div class="cell num" style="left:616.70px;width:93.80px;top:543.18px;line-height:15px;">82.8</div>
<div class="cell num" style="left:710.50px;width:93.30px;top:543.18px;line-height:15px;">83.9</div>
<div class="cell num" style="left:803.80px;width:94.00px;top:543.18px;line-height:15px;">83.9</div>
<div class="cell num" style="left:897.80px;width:93.70px;top:543.18px;line-height:15px;">84.8</div>
<div style="left:43.00px;top:557.84px;width:385.00px;height:1.10px;background:#aad3e2;"></div>
<div style="left:428.00px;top:557.89px;width:562.50px;height:1.00px;background:#f8e9e1;"></div>
<div class="cell" style="left:43.85px;width:291px;top:562.75px;line-height:15px;letter-spacing:-0.065px;">Preventive Maintenance Ratio</div>
<div class="cell" style="left:334.8px;width:94px;top:562.75px;line-height:15px;">May</div>
<div class="cell num" style="left:429.00px;width:93.90px;top:562.90px;line-height:15px;">88.7</div>
<div class="cell num" style="left:522.90px;width:93.80px;top:562.90px;line-height:15px;">77.2</div>
<div class="cell num" style="left:616.70px;width:93.80px;top:562.90px;line-height:15px;">78.1</div>
<div class="cell num" style="left:710.50px;width:93.30px;top:562.90px;line-height:15px;">84.9</div>
<div class="cell num" style="left:803.80px;width:94.00px;top:562.90px;line-height:15px;">71.3</div>
<div class="cell num" style="left:897.80px;width:93.70px;top:562.90px;line-height:15px;">78.9</div>
<div style="left:43.00px;top:577.56px;width:385.00px;height:1.10px;background:#aad3e2;"></div>
<div style="left:428.00px;top:577.61px;width:562.50px;height:1.00px;background:#f8e9e1;"></div>
<div class="cell" style="left:43.85px;width:291px;top:582.47px;line-height:15px;letter-spacing:-0.065px;">Preventive Maintenance Ratio</div>
<div class="cell" style="left:334.8px;width:94px;top:582.47px;line-height:15px;">Jun</div>
<div class="cell num" style="left:429.00px;width:93.90px;top:582.62px;line-height:15px;">89.1</div>
<div class="cell num" style="left:522.90px;width:93.80px;top:582.62px;line-height:15px;">92.7</div>
<div class="cell num" style="left:616.70px;width:93.80px;top:582.62px;line-height:15px;">79.3</div>
<div class="cell num" style="left:710.50px;width:93.30px;top:582.62px;line-height:15px;">85.6</div>
<div class="cell num" style="left:803.80px;width:94.00px;top:582.62px;line-height:15px;">85.6</div>
<div class="cell num" style="left:897.80px;width:93.70px;top:582.62px;line-height:15px;">69.3</div>
<div style="left:43.00px;top:597.28px;width:385.00px;height:1.10px;background:#aad3e2;"></div>
<div style="left:428.00px;top:597.33px;width:562.50px;height:1.00px;background:#f8e9e1;"></div>
<div class="cell" style="left:43.85px;width:291px;top:602.19px;line-height:15px;letter-spacing:-0.065px;">Preventive Maintenance Ratio</div>
<div class="cell" style="left:334.8px;width:94px;top:602.19px;line-height:15px;">Jul</div>
<div class="cell num" style="left:429.00px;width:93.90px;top:602.34px;line-height:15px;">96.9</div>
<div class="cell num" style="left:522.90px;width:93.80px;top:602.34px;line-height:15px;">92</div>
<div class="cell num" style="left:616.70px;width:93.80px;top:602.34px;line-height:15px;">121.1</div>
<div class="cell num" style="left:710.50px;width:93.30px;top:602.34px;line-height:15px;">87.2</div>
<div class="cell num" style="left:803.80px;width:94.00px;top:602.34px;line-height:15px;">90.7</div>
<div class="cell num" style="left:897.80px;width:93.70px;top:602.34px;line-height:15px;">83.7</div>
<div style="left:43.00px;top:617.00px;width:385.00px;height:1.10px;background:#aad3e2;"></div>
<div style="left:428.00px;top:617.05px;width:562.50px;height:1.00px;background:#f8e9e1;"></div>
<div class="cell" style="left:43.85px;width:291px;top:621.91px;line-height:15px;letter-spacing:-0.065px;">Preventive Maintenance Ratio</div>
<div class="cell" style="left:334.8px;width:94px;top:621.91px;line-height:15px;">Aug</div>
<div class="cell num" style="left:429.00px;width:93.90px;top:622.06px;line-height:15px;">77.6</div>
<div class="cell num" style="left:522.90px;width:93.80px;top:622.06px;line-height:15px;">59.7</div>
<div class="cell num" style="left:616.70px;width:93.80px;top:622.06px;line-height:15px;">92.3</div>
<div class="cell num" style="left:710.50px;width:93.30px;top:622.06px;line-height:15px;">86</div>
<div class="cell num" style="left:803.80px;width:94.00px;top:622.06px;line-height:15px;">67.1</div>
<div class="cell num" style="left:897.80px;width:93.70px;top:622.06px;line-height:15px;">103.2</div>
<div style="left:43.00px;top:636.72px;width:385.00px;height:1.10px;background:#aad3e2;"></div>
<div style="left:428.00px;top:636.77px;width:562.50px;height:1.00px;background:#f8e9e1;"></div>
<div class="cell" style="left:43.85px;width:291px;top:641.63px;line-height:15px;letter-spacing:-0.065px;">Preventive Maintenance Ratio</div>
<div class="cell" style="left:334.8px;width:94px;top:641.63px;line-height:15px;">Sep</div>
<div class="cell num" style="left:429.00px;width:93.90px;top:641.78px;line-height:15px;">89</div>
<div class="cell num" style="left:522.90px;width:93.80px;top:641.78px;line-height:15px;">89.9</div>
<div class="cell num" style="left:616.70px;width:93.80px;top:641.78px;line-height:15px;">96.1</div>
<div class="cell num" style="left:710.50px;width:93.30px;top:641.78px;line-height:15px;">86.3</div>
<div class="cell num" style="left:803.80px;width:94.00px;top:641.78px;line-height:15px;">77.7</div>
<div class="cell num" style="left:897.80px;width:93.70px;top:641.78px;line-height:15px;">69.9</div>
<div style="left:43.00px;top:656.44px;width:385.00px;height:1.10px;background:#aad3e2;"></div>
<div style="left:428.00px;top:656.49px;width:562.50px;height:1.00px;background:#f8e9e1;"></div>
<div class="cell" style="left:43.85px;width:291px;top:661.35px;line-height:15px;letter-spacing:-0.065px;">Preventive Maintenance Ratio</div>
<div class="cell" style="left:334.8px;width:94px;top:661.35px;line-height:15px;">Oct</div>
<div class="cell num" style="left:429.00px;width:93.90px;top:661.50px;line-height:15px;">73.4</div>
<div class="cell num" style="left:522.90px;width:93.80px;top:661.50px;line-height:15px;">68.3</div>
<div class="cell num" style="left:616.70px;width:93.80px;top:661.50px;line-height:15px;">77.1</div>
<div class="cell num" style="left:710.50px;width:93.30px;top:661.50px;line-height:15px;">85</div>
<div class="cell num" style="left:803.80px;width:94.00px;top:661.50px;line-height:15px;">100.3</div>
<div class="cell num" style="left:897.80px;width:93.70px;top:661.50px;line-height:15px;">90.1</div>
<div style="left:43.00px;top:676.16px;width:385.00px;height:1.10px;background:#aad3e2;"></div>
<div style="left:428.00px;top:676.21px;width:562.50px;height:1.00px;background:#f8e9e1;"></div>
<div class="cell" style="left:43.85px;width:291px;top:681.07px;line-height:15px;letter-spacing:-0.065px;">Preventive Maintenance Ratio</div>
<div class="cell" style="left:334.8px;width:94px;top:681.07px;line-height:15px;">Nov</div>
<div class="cell num" style="left:429.00px;width:93.90px;top:681.22px;line-height:15px;">72.5</div>
<div class="cell num" style="left:522.90px;width:93.80px;top:681.22px;line-height:15px;">62.4</div>
<div class="cell num" style="left:616.70px;width:93.80px;top:681.22px;line-height:15px;">87.7</div>
<div class="cell num" style="left:710.50px;width:93.30px;top:681.22px;line-height:15px;">83.9</div>
<div class="cell num" style="left:803.80px;width:94.00px;top:681.22px;line-height:15px;">71.3</div>
<div class="cell num" style="left:897.80px;width:93.70px;top:681.22px;line-height:15px;">98.2</div>
<div style="left:43.00px;top:695.88px;width:385.00px;height:1.10px;background:#aad3e2;"></div>
<div style="left:428.00px;top:695.93px;width:562.50px;height:1.00px;background:#f8e9e1;"></div>
<div class="cell" style="left:43.85px;width:291px;top:700.79px;line-height:15px;letter-spacing:-0.065px;">Preventive Maintenance Ratio</div>
<div class="cell" style="left:334.8px;width:94px;top:700.79px;line-height:15px;">Dec</div>
<div class="cell num" style="left:429.00px;width:93.90px;top:700.94px;line-height:15px;">87.1</div>
<div class="cell num" style="left:522.90px;width:93.80px;top:700.94px;line-height:15px;">85.2</div>
<div class="cell num" style="left:616.70px;width:93.80px;top:700.94px;line-height:15px;">96.6</div>
<div class="cell num" style="left:710.50px;width:93.30px;top:700.94px;line-height:15px;">84.2</div>
<div class="cell num" style="left:803.80px;width:94.00px;top:700.94px;line-height:15px;">77.4</div>
<div class="cell num" style="left:897.80px;width:93.70px;top:700.94px;line-height:15px;">94.2</div>
<div style="left:43.00px;top:715.60px;width:385.00px;height:1.10px;background:#aad3e2;"></div>
<div style="left:428.00px;top:715.65px;width:562.50px;height:1.00px;background:#f8e9e1;"></div>
<div style="left:333.50px;top:479.51px;width:1.00px;height:236.64px;background:#8dc0da;"></div>
<div style="left:427.50px;top:479.51px;width:1.00px;height:236.64px;background:#8dc0da;"></div>
<div style="left:42.20px;top:479.51px;width:1.00px;height:236.64px;background:#c3d0da;"></div>
<div style="left:521.40px;top:479.51px;width:1.00px;height:236.64px;background:#f8e9e1;"></div>
<div style="left:615.20px;top:479.51px;width:1.00px;height:236.64px;background:#f8e9e1;"></div>
<div style="left:709.00px;top:479.51px;width:1.00px;height:236.64px;background:#f8e9e1;"></div>
<div style="left:802.30px;top:479.51px;width:1.00px;height:236.64px;background:#f8e9e1;"></div>
<div style="left:896.30px;top:479.51px;width:1.00px;height:236.64px;background:#f8e9e1;"></div>
<div style="left:990.00px;top:479.51px;width:1.00px;height:236.64px;background:#f8e9e1;"></div>
<div style="left:0.00px;top:706.80px;width:1008.00px;height:13.20px;background:#f9f9fa;"></div>
<div style="left:0.00px;top:706.50px;width:1008.00px;height:0.80px;background:#ececec;"></div>
<div style="left:42.30px;top:706.80px;width:1.00px;height:10.20px;background:#d5d5d5;"></div>
<div style="left:45.00px;top:709.30px;width:862.00px;height:7.00px;background:#dadada;border-radius:3.5px;"></div>
<div style="left:0.00px;top:717.00px;width:1008.00px;height:1.00px;background:#e6e6e6;"></div>
<div style="left:0.00px;top:718.00px;width:1008.00px;height:2.00px;background:#f6f6f6;"></div>
</div></body></html>
